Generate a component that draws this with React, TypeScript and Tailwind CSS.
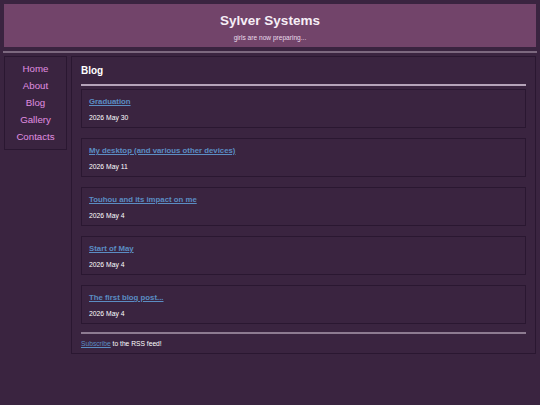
import React from 'react';

const posts = [
  { title: 'Graduation', date: '2026 May 30' },
  { title: 'My desktop (and various other devices)', date: '2026 May 11' },
  { title: 'Touhou and its impact on me', date: '2026 May 4' },
  { title: 'Start of May', date: '2026 May 4' },
  { title: 'The first blog post...', date: '2026 May 4' },
];

const navLinks = ['Home', 'About', 'Blog', 'Gallery', 'Contacts'];

export default function App() {
  return (
    <div className="min-h-[405px] bg-[#3a2440] font-['Liberation_Sans',Arial,sans-serif] text-white">
      {/* Header */}
      <div className="px-[4px] pt-[4px]">
        <div className="h-[43px] bg-[#72446a] flex flex-col items-center pt-[9px]">
          <h1 className="text-[13.5px] leading-[16px] font-bold text-[#f6eef6]">Sylver Systems</h1>
          <p className="text-[6.6px] leading-[9px] mt-[4px] text-[#eadcea]">girls are now preparing...</p>
        </div>
      </div>
      <div className="mx-[3px] mt-[4px] h-[2px] bg-[#7c687f]" />

      <div className="flex gap-[4px] px-[4px] mt-[3px]">
        {/* Nav */}
        <nav className="w-[63px] h-[94px] shrink-0 border border-[#2a1731] flex flex-col items-center pt-[3px]">
          {navLinks.map(l => (
            <a key={l} href="#" className="text-[9.7px] leading-[17px] text-[#e08fe0]">
              {l}
            </a>
          ))}
        </nav>

        {/* Main */}
        <main className="w-[465px] h-[298px] border border-[#2a1731] px-[9px] pt-[8px]">
          <h2 className="text-[10px] leading-[12px] font-bold">Blog</h2>
          <div className="mt-[7px] h-[2px] bg-[#b5a3b9]" />
          <div className="mt-[3px] flex flex-col gap-[10px]">
            {posts.map(p => (
              <div key={p.title} className="h-[39px] border border-[#2a1731] px-[7px] pt-[7px]">
                <a href="#" className="block text-[7.8px] leading-[10px] font-bold underline text-[#5b8dc3]">
                  {p.title}
                </a>
                <div className="mt-[6px] text-[6.8px] leading-[9px]">{p.date}</div>
              </div>
            ))}
          </div>
          <div className="mt-[8px] h-[2px] bg-[#8d7b91]" />
          <p className="mt-[5px] text-[6.7px] leading-[9px]">
            <a href="#" className="underline text-[#5b8dc3]">Subscribe</a> to the RSS feed!
          </p>
        </main>
      </div>
    </div>
  );
}
